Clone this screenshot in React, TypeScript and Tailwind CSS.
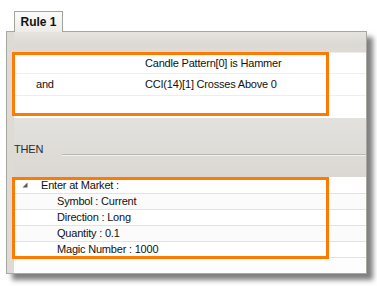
const font = { fontFamily: '"Liberation Sans", Arial, sans-serif' };

const conditions = [
  { join: "", text: "Candle Pattern[0] is Hammer", h: "h-[21px]" },
  { join: "and", text: "CCI(14)[1] Crosses Above 0", h: "h-[22px]" },
];

const params = [
  "Symbol : Current",
  "Direction : Long",
  "Quantity : 0.1",
  "Magic Number : 1000",
];

function Band({ className = "" }: { className?: string }) {
  return (
    <div
      className={`bg-[linear-gradient(180deg,#e6e4e0_0%,#dcd9d4_60%,#dedbd6_100%)] ${className}`}
    />
  );
}

export default function App() {
  return (
    <div
      className="h-[286px] w-[377px] overflow-hidden bg-white text-[11px] tracking-[-0.2px] text-[#111]"
      style={font}
    >
      <div className="pl-[6px] pt-[11px]">
        {/* tab */}
        <div className="relative z-10 -mb-px ml-[8px] flex h-[21px] w-[49px] items-center justify-center border border-b-0 border-[#a3a29d] bg-[linear-gradient(180deg,#fbfbfa,#ecebe8)] text-[12px] font-bold tracking-normal text-[#111]">
          Rule 1
        </div>

        {/* window */}
        <div className="flex h-[243px] w-[361px] flex-col border border-[#a8a7a2] bg-[#dedbd6] pl-[7px] shadow-[6px_6px_5px_rgba(0,0,0,0.5)]">
          <Band className="h-[21px] border-b border-[#ecebe8]" />

          {/* conditions grid */}
          <div className="relative flex h-[65px] flex-col bg-white">
            {conditions.map((c) => (
              <div
                key={c.text}
                className={`flex ${c.h} items-center border-b border-[#eeeeea]`}
              >
                <span className="w-[131px] pl-[22px]">{c.join}</span>
                <span>{c.text}</span>
              </div>
            ))}
            <div className="flex-1" />
            <div className="absolute left-[-2px] top-[-1px] h-[64px] w-[317px] border-[3px] border-[#ff7a00]" />
          </div>

          {/* THEN section */}
          <div className="flex h-[59px] items-start bg-[linear-gradient(180deg,#e3e1dd,#dbd8d3)] pt-[24px] text-[#2a2a38]">
            <span className="w-[48px] leading-[14px]">THEN</span>
            <div className="mt-[12px] h-[2px] flex-1 border-t border-b border-t-[#b8b6b0] border-b-[#f2f1ee]" />
          </div>

          {/* actions grid */}
          <div className="relative flex flex-1 flex-col bg-white">
            <div className="flex h-[17px] items-center border-b border-[#e3e2dc]">
              <svg
                width="6"
                height="6"
                viewBox="0 0 6 6"
                className="ml-[8px] mr-[13px]"
              >
                <polygon points="5.5,0.5 5.5,5.5 0.5,5.5" fill="#5a5a5a" />
              </svg>
              <span>Enter at Market :</span>
            </div>
            {params.map((p, i) => (
              <div
                key={p}
                className={`flex h-[16px] items-center border-b border-[#e3e2dc] pl-[43px] ${
                  i % 2 === 0 ? "bg-[#fbfbfb]" : "bg-white"
                }`}
              >
                {p}
              </div>
            ))}
            <div className="flex-1 bg-[#fdfdfd]" />
            <div className="absolute left-[-2px] top-0 h-[82px] w-[317px] border-[3px] border-[#ff7a00]" />
          </div>
        </div>
      </div>
    </div>
  );
}
